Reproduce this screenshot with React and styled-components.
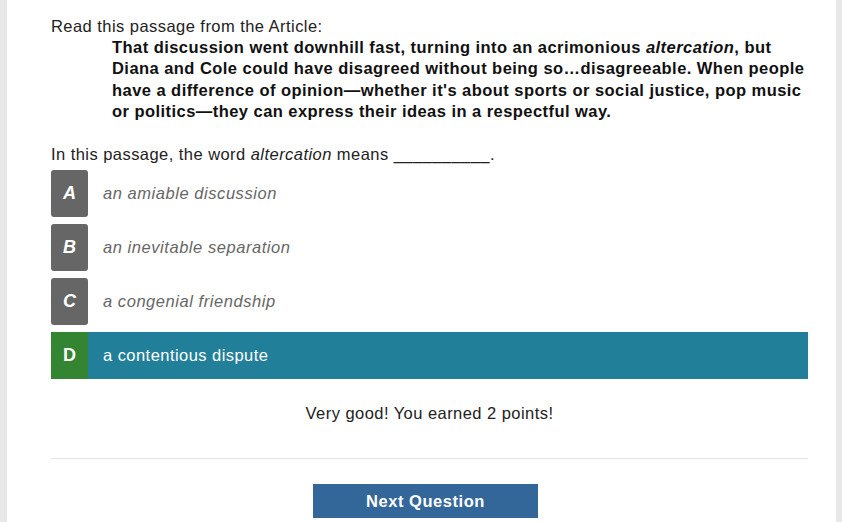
import React from "react";
import styled, { createGlobalStyle } from "styled-components";

const GlobalStyle = createGlobalStyle`
  html, body {
    margin: 0;
    padding: 0;
    background: #e8e8e8;
    font-family: "Liberation Sans", Arial, sans-serif;
    color: #222;
  }
`;

const Card = styled.div`
  margin: 0 6px 0 7px;
  min-height: 522px;
  background: #fff;
  box-sizing: border-box;
  padding: 16px 28px 0 44px;
  overflow: hidden;
  font-size: 16.5px;
  letter-spacing: 0.45px;
`;

const Intro = styled.div`
  line-height: 21px;
`;

const Passage = styled.div`
  margin: 0 -6px 0 61px;
  font-weight: bold;
  letter-spacing: 0.45px;
  line-height: 21.3px;
  color: #111;
`;

const Prompt = styled.div`
  margin-top: 21px;
  line-height: 22px;
`;

const Options = styled.div`
  margin-top: 5px;
  display: flex;
  flex-direction: column;
  gap: 7px;
`;

const Option = styled.div`
  display: flex;
  align-items: center;
  height: 47px;
  background: ${p => (p.selected ? "#217f9a" : "transparent")};
`;

const Letter = styled.div`
  width: 37px;
  height: 47px;
  display: flex;
  align-items: center;
  justify-content: center;
  background: ${p => (p.selected ? "#338532" : "#666")};
  border-radius: ${p => (p.selected ? "0" : "3px")};
  color: #fff;
  font-weight: bold;
  font-style: ${p => (p.selected ? "normal" : "italic")};
  font-size: 18px;
  letter-spacing: 0;
`;

const OptionText = styled.div`
  margin-left: 15px;
  font-style: ${p => (p.selected ? "normal" : "italic")};
  letter-spacing: ${p => (p.selected ? "0.45px" : "0.55px")};
  color: ${p => (p.selected ? "#fff" : "#666")};
`;

const Feedback = styled.div`
  margin-top: 23px;
  text-align: center;
  line-height: 22px;
`;

const Rule = styled.hr`
  margin: 34px 0 0;
  border: 0;
  border-top: 1px solid #e5e5e5;
`;

const Footer = styled.div`
  display: flex;
  justify-content: center;
  padding-top: 25px;
`;

const NextButton = styled.button`
  width: 225px;
  height: 34px;
  border: 0;
  margin-right: 8px;
  background: #336699;
  color: #fff;
  font-family: "Liberation Sans", Arial, sans-serif;
  font-weight: bold;
  font-size: 16.5px;
  letter-spacing: 0.55px;
`;

const options = [
  { letter: "A", text: "an amiable discussion" },
  { letter: "B", text: "an inevitable separation" },
  { letter: "C", text: "a congenial friendship" },
  { letter: "D", text: "a contentious dispute", selected: true }
];

const App = () => (
  <>
    <GlobalStyle />
    <Card>
      <Intro>Read this passage from the Article:</Intro>
      <Passage>
        That discussion went downhill fast, turning into an acrimonious{" "}
        <i>altercation</i>, but Diana and Cole could have disagreed without
        being so…disagreeable. When people have a difference of
        opinion—whether it's about sports or social justice, pop music or
        politics—they can express their ideas in a respectful way.
      </Passage>
      <Prompt>
        In this passage, the word <i>altercation</i> means __________.
      </Prompt>
      <Options>
        {options.map(o => (
          <Option key={o.letter} selected={o.selected}>
            <Letter selected={o.selected}>{o.letter}</Letter>
            <OptionText selected={o.selected}>{o.text}</OptionText>
          </Option>
        ))}
      </Options>
      <Feedback>Very good! You earned 2 points!</Feedback>
      <Rule />
      <Footer>
        <NextButton>Next Question</NextButton>
      </Footer>
    </Card>
  </>
);

export default App;
